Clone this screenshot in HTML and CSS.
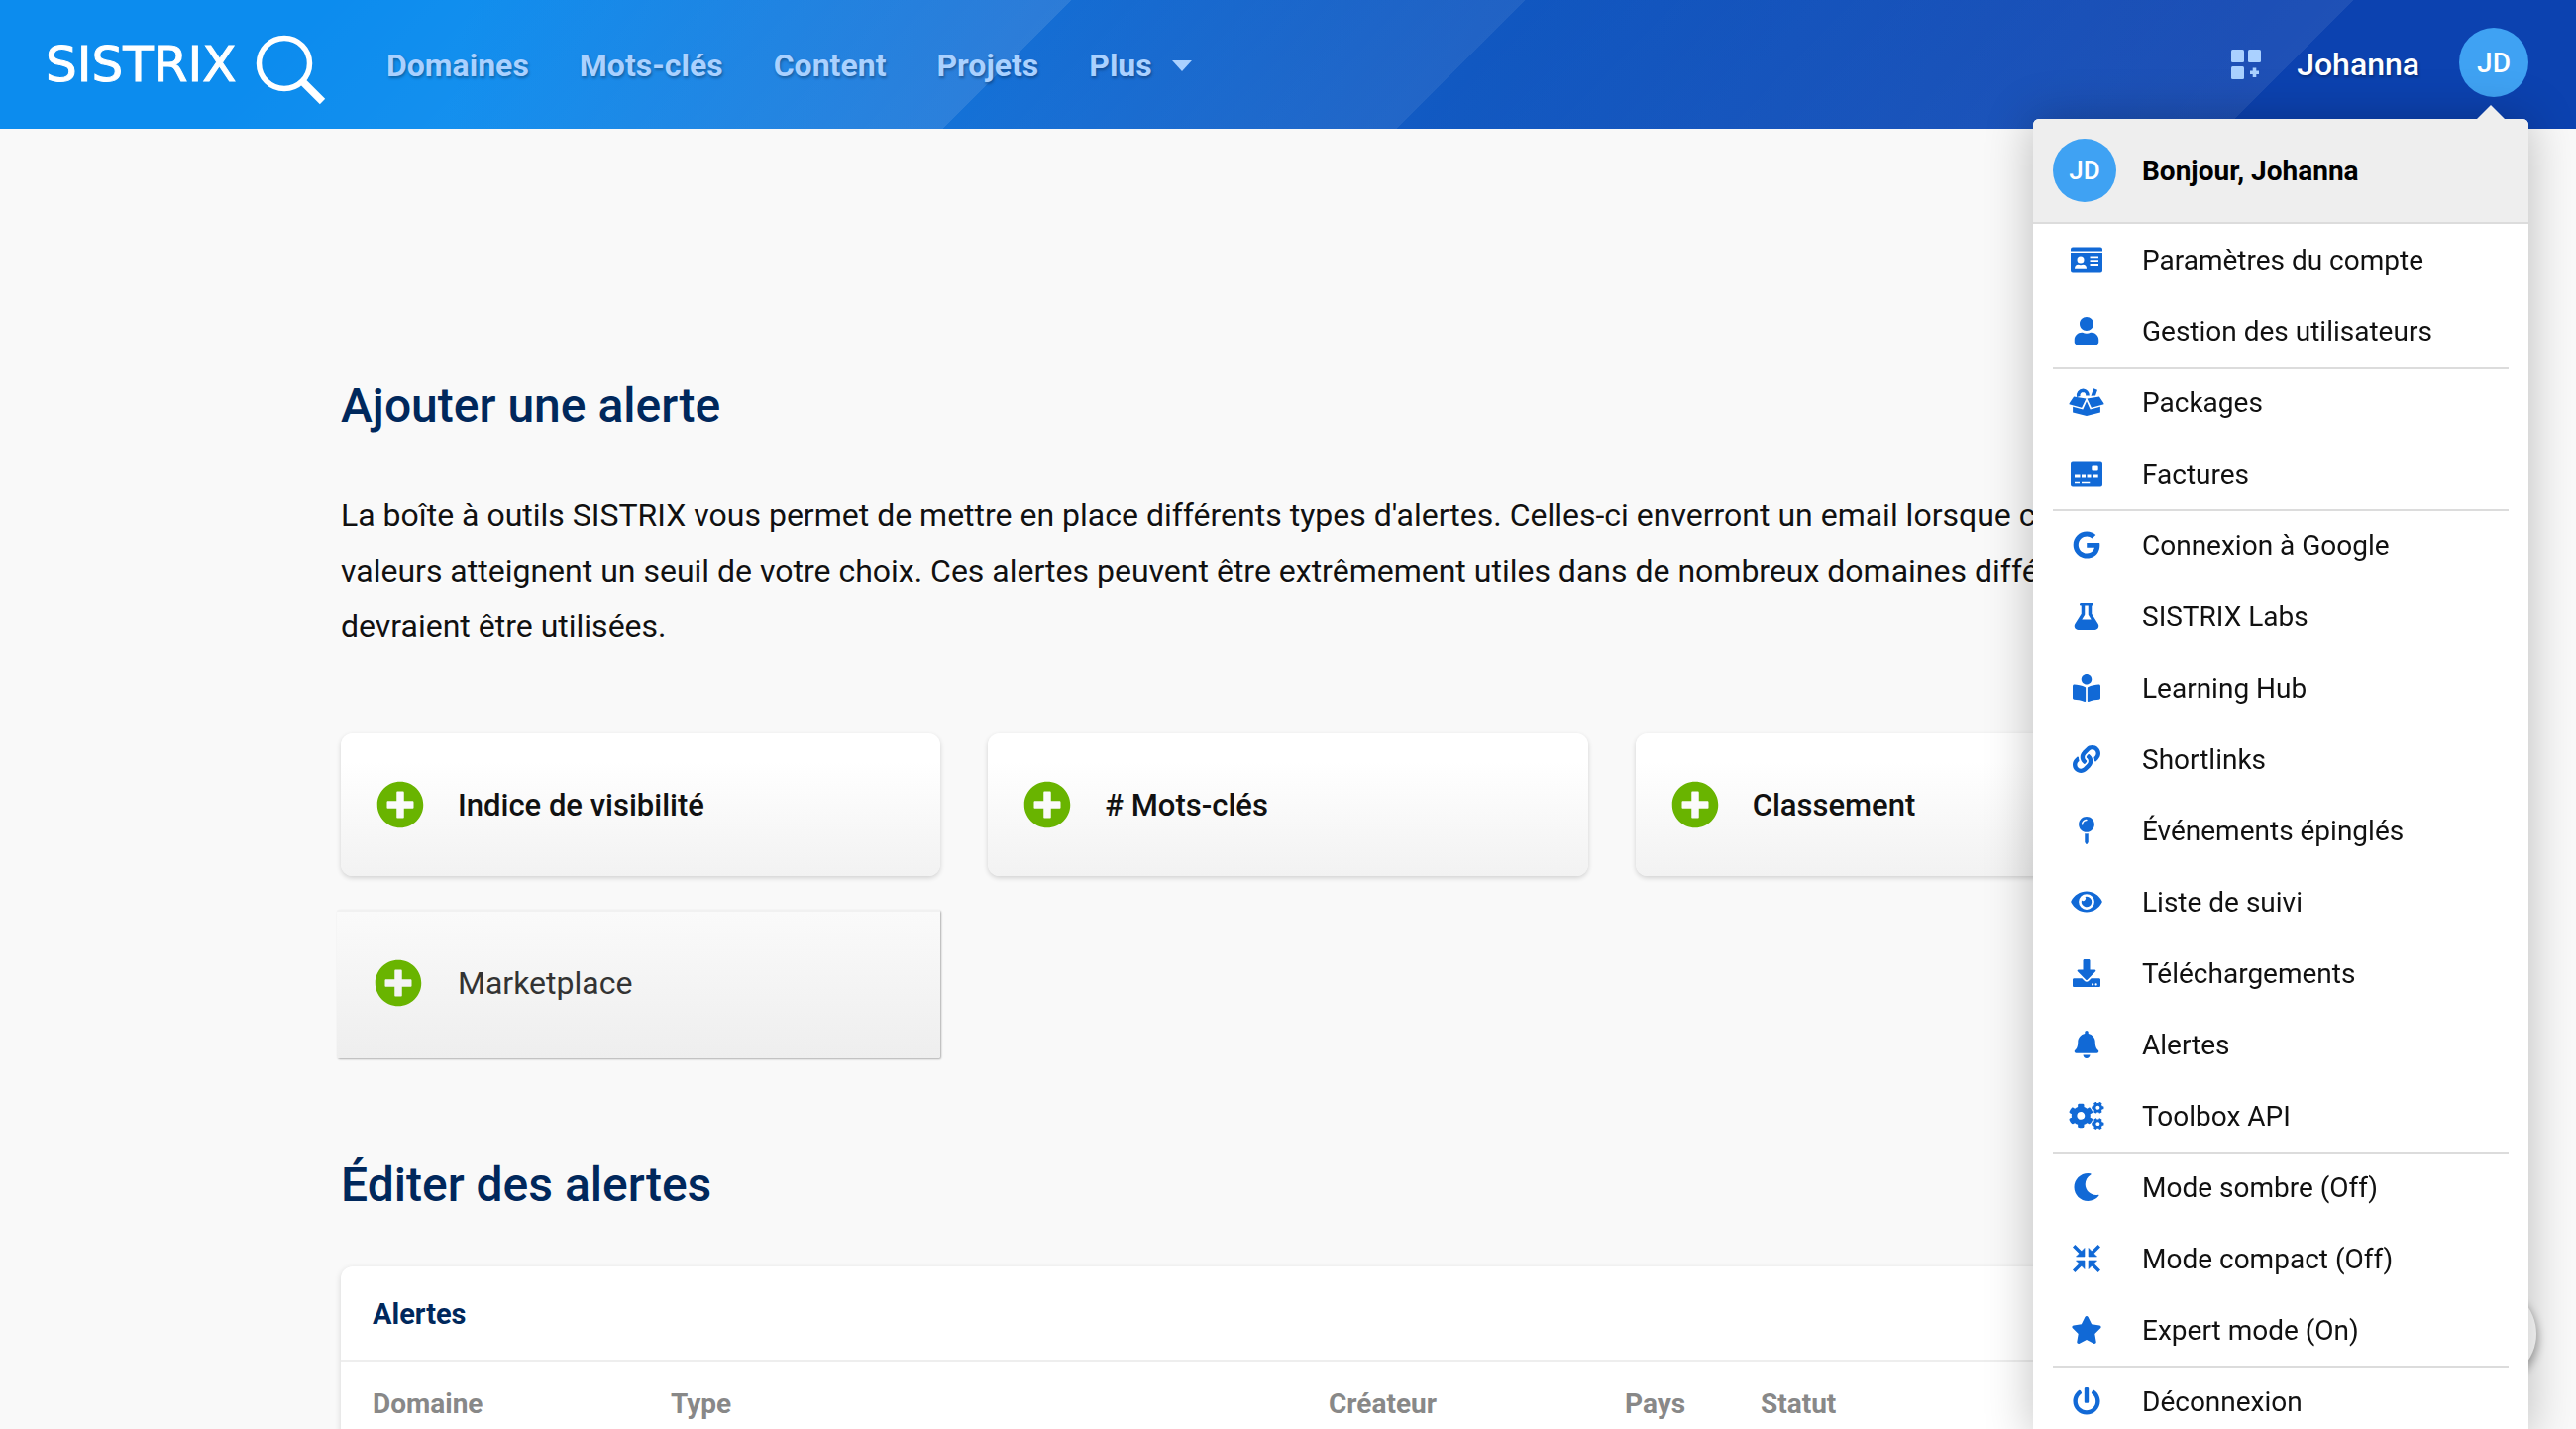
FILE: index.html
```html
<!DOCTYPE html>
<html lang="fr">
<head>
<meta charset="utf-8">
<meta name="viewport" content="width=device-width, initial-scale=1">
<title>Alertes - SISTRIX</title>
<link rel="stylesheet" href="styles.css">
</head>
<body>
<svg class="sprite" aria-hidden="true">
  <symbol id="i-plus" viewBox="0 0 512 512"><path d="M256 8C119 8 8 119 8 256s111 248 248 248 248-111 248-248S393 8 256 8zm144 276c0 6.6-5.4 12-12 12h-92v92c0 6.6-5.4 12-12 12h-56c-6.6 0-12-5.4-12-12v-92h-92c-6.6 0-12-5.4-12-12v-56c0-6.6 5.4-12 12-12h92v-92c0-6.6 5.4-12 12-12h56c6.6 0 12 5.4 12 12v92h92c6.6 0 12 5.4 12 12v56z"/></symbol>
  <symbol id="i-card" viewBox="0 0 32 28"><path fill-rule="evenodd" d="M2 1.500h28a2 2 0 0 1 2 2V5.500H0V3.500a2 2 0 0 1 2-2zM0 7h32v17.500a2 2 0 0 1-2 2H2a2 2 0 0 1-2-2zM10 10.500a3.500 3.500 0 1 0 0 7a3.500 3.500 0 1 0 0-7zM4 22.700h12c0-2.500-1.500-4-3.500-4l-2.500.6-2.500-.6c-2 0-3.500 1.500-3.500 4zM19.500 10.500v1.800h8.500v-1.800zM19.500 14.300v1.800h8.500v-1.800zM19.500 18.100v1.800h8.500v-1.800z"/></symbol>
  <symbol id="i-user" viewBox="0 0 448 512"><path d="M224 256c70.700 0 128-57.300 128-128S294.700 0 224 0 96 57.300 96 128s57.300 128 128 128zm89.600 32h-16.700c-22.200 10.200-46.900 16-72.900 16s-50.600-5.800-72.900-16h-16.700C60.200 288 0 348.200 0 422.400V464c0 26.500 21.500 48 48 48h352c26.500 0 48-21.500 48-48v-41.600c0-74.200-60.200-134.400-134.400-134.400z"/></symbol>
  <symbol id="i-box" viewBox="0 0 35 28"><path d="M9.300 8.500A5 5 0 0 1 14 2.200A5 5 0 0 1 18.500 7.500" fill="none" stroke="currentColor" stroke-width="3.600"/><path d="M24.600.3l3.900 1.500-2 5.700-4.500.3zM4.600 8.500l12.400 2-4.400 9.200L.7 16.600a1 1 0 0 1-.6-1.400zM30.400 8.500l-12.400 2 4.400 9.200 11.900-3.100a1 1 0 0 0 .6-1.400zM3.600 18.800l10.200 2.800 3.700-8.400 3.700 8.400 10.200-2.800v5.600L17.500 28 3.600 24.400z"/></symbol>
  <symbol id="i-bill" viewBox="0 0 32 28"><path fill-rule="evenodd" d="M2 1.500h28a2 2 0 0 1 2 2v21a2 2 0 0 1-2 2H2a2 2 0 0 1-2-2v-21a2 2 0 0 1 2-2zM22.500 5.500h4a1.200 1.200 0 0 1 1.200 1.200v2.600a1.200 1.200 0 0 1-1.200 1.200h-4a1.200 1.200 0 0 1-1.200-1.200V6.700a1.200 1.200 0 0 1 1.200-1.200zM4 14.500v3h5.500v-3zM11 14.500v3h4v-3zM16.500 14.500v3h4v-3zM22 14.500v3h5.700v-3zM4 21.700v1.600h5v-1.600zM11 21.700v1.600h8.300v-1.600z"/></symbol>
  <symbol id="i-google" viewBox="0 0 488 512"><path d="M488 261.800C488 403.300 391.100 504 248 504 110.800 504 0 393.200 0 256S110.800 8 248 8c66.800 0 123 24.500 166.300 64.900l-67.500 64.900C258.500 52.600 94.300 116.600 94.300 256c0 86.500 69.100 156.600 153.700 156.600 98.200 0 135-70.400 140.800-106.900H248v-85.300h236.100c2.300 12.700 3.900 24.900 3.900 41.400z"/></symbol>
  <symbol id="i-flask" viewBox="0 0 448 512"><path d="M437.200 403.500L320 215V64h8c13.300 0 24-10.700 24-24V24c0-13.300-10.700-24-24-24H120c-13.300 0-24 10.700-24 24v16c0 13.300 10.700 24 24 24h8v151L10.800 403.500C-18.500 450.600 15.300 512 70.900 512h306.200c55.700 0 89.400-61.500 60.100-108.500zM137.900 320l48.200-77.600c3.700-5.200 5.800-11.600 5.800-18.400V64h64v160c0 6.900 2.200 13.200 5.800 18.400l48.200 77.600h-172z"/></symbol>
  <symbol id="i-reader" viewBox="0 0 512 512"><path d="M352 96c0-53.020-42.980-96-96-96s-96 42.980-96 96 42.980 96 96 96 96-42.980 96-96zM233.590 241.100c-59.330-36.320-155.430-46.300-203.790-49.050C13.550 191.130 0 203.510 0 219.140v222.800c0 14.330 11.590 26.280 26.490 27.050 43.660 2.290 131.990 10.680 193.040 41.430 9.370 4.720 20.480-1.710 20.480-11.870V252.560c-.01-4.670-2.320-8.950-6.420-11.460zm248.610-49.050c-48.350 2.740-144.460 12.730-203.780 49.050-4.100 2.510-6.410 6.960-6.410 11.630v245.790c0 10.190 11.140 16.630 20.540 11.900 61.040-30.720 149.320-39.110 192.970-41.400 14.900-.78 26.490-12.730 26.490-27.060V219.140c-.01-15.630-13.560-28.010-29.810-27.090z"/></symbol>
  <symbol id="i-link" viewBox="0 0 512 512"><path d="M326.612 185.391c59.747 59.809 58.927 155.698.36 214.590-.11.120-.24.250-.36.370l-67.200 67.200c-59.270 59.270-155.699 59.262-214.960 0-59.270-59.260-59.270-155.700 0-214.960l37.106-37.106c9.840-9.840 26.786-3.300 27.294 10.606.648 17.722 3.826 35.527 9.690 52.721 1.986 5.822.567 12.262-3.783 16.612l-13.087 13.087c-28.026 28.026-28.905 73.660-1.155 101.960 28.024 28.579 74.086 28.749 102.325.510l67.200-67.190c28.191-28.191 28.073-73.757 0-101.830-3.701-3.694-7.429-6.564-10.341-8.569a16.037 16.037 0 0 1-6.947-12.606c-.396-10.567 3.348-21.456 11.698-29.806l21.054-21.055c5.521-5.521 14.182-6.199 20.584-1.731a152.482 152.482 0 0 1 20.522 17.197zM467.547 44.449c-59.261-59.262-155.690-59.270-214.960 0l-67.200 67.200c-.12.120-.25.250-.36.370-58.566 58.892-59.387 154.781.360 214.590a152.454 152.454 0 0 0 20.521 17.196c6.402 4.468 15.064 3.789 20.584-1.731l21.054-21.055c8.350-8.350 12.094-19.239 11.698-29.806a16.037 16.037 0 0 0-6.947-12.606c-2.912-2.005-6.640-4.875-10.341-8.569-28.073-28.073-28.191-73.639 0-101.830l67.200-67.190c28.239-28.239 74.300-28.069 102.325.510 27.750 28.300 26.872 73.934-1.155 101.960l-13.087 13.087c-4.350 4.350-5.769 10.790-3.783 16.612 5.864 17.194 9.042 34.999 9.690 52.721.509 13.906 17.454 20.446 27.294 10.606l37.106-37.106c59.271-59.259 59.271-155.699.001-214.959z"/></symbol>
  <symbol id="i-pin" viewBox="0 0 288 512"><path d="M112 316.940v156.690l22.020 33.020c4.750 7.120 15.220 7.120 19.970 0L176 473.630V316.940c-10.390 1.920-21.060 3.060-32 3.060s-21.610-1.140-32-3.060zM144 0C64.470 0 0 64.470 0 144s64.470 144 144 144 144-64.470 144-144S223.530 0 144 0zm0 76c-37.500 0-68 30.500-68 68 0 6.620-5.380 12-12 12s-12-5.380-12-12c0-50.730 41.280-92 92-92 6.620 0 12 5.380 12 12s-5.380 12-12 12z"/></symbol>
  <symbol id="i-eye" viewBox="0 0 576 512"><path d="M572.520 241.400C518.290 135.590 410.930 64 288 64S57.680 135.640 3.480 241.410a32.350 32.350 0 0 0 0 29.190C57.710 376.410 165.070 448 288 448s230.320-71.640 284.520-177.410a32.350 32.350 0 0 0 0-29.190zM288 400a144 144 0 1 1 144-144 143.930 143.930 0 0 1-144 144zm0-240a95.310 95.310 0 0 0-25.310 3.790 47.850 47.850 0 0 1-66.900 66.900A95.780 95.780 0 1 0 288 160z"/></symbol>
  <symbol id="i-download" viewBox="0 0 512 512"><path d="M216 0h80c13.300 0 24 10.700 24 24v168h87.700c17.800 0 26.700 21.500 14.100 34.100L269.700 378.300c-7.500 7.500-19.800 7.500-27.300 0L90.100 226.100c-12.600-12.600-3.700-34.100 14.100-34.100H192V24c0-13.300 10.700-24 24-24zm296 376v112c0 13.300-10.700 24-24 24H24c-13.300 0-24-10.700-24-24V376c0-13.300 10.700-24 24-24h146.700l49 49c20.100 20.100 52.500 20.100 72.600 0l49-49H488c13.300 0 24 10.700 24 24zm-124 88c0-11-9-20-20-20s-20 9-20 20 9 20 20 20 20-9 20-20zm64 0c0-11-9-20-20-20s-20 9-20 20 9 20 20 20 20-9 20-20z"/></symbol>
  <symbol id="i-bell" viewBox="0 0 448 512"><path d="M224 512c35.320 0 63.970-28.650 63.970-64H160.030c0 35.350 28.650 64 63.970 64zm215.390-149.710c-19.320-20.760-55.470-51.990-55.470-154.290 0-77.700-54.480-139.900-127.940-155.160V32c0-17.670-14.320-32-31.980-32s-31.980 14.330-31.980 32v20.840C118.560 68.100 64.080 130.300 64.080 208c0 102.300-36.150 133.530-55.470 154.290-6 6.450-8.660 14.160-8.610 21.710.11 16.400 12.980 32 32.100 32h383.800c19.120 0 32-15.600 32.100-32 .05-7.550-2.610-15.270-8.610-21.710z"/></symbol>
  <symbol id="i-cogs" viewBox="0 0 640 512"><path d="M512.100 191l-8.200 14.300c-3 5.300-9.400 7.500-15.100 5.400-11.800-4.400-22.600-10.700-32.100-18.600-4.600-3.800-5.800-10.500-2.800-15.700l8.200-14.300c-6.900-8-12.300-17.300-15.900-27.400h-16.500c-6 0-11.200-4.300-12.200-10.300-2-12-2.100-24.600 0-37.100 1-6 6.200-10.400 12.200-10.400h16.500c3.600-10.100 9-19.400 15.900-27.400l-8.200-14.300c-3-5.200-1.900-11.900 2.800-15.700 9.500-7.900 20.400-14.200 32.100-18.600 5.700-2.100 12.100.1 15.100 5.400l8.200 14.300c10.500-1.900 21.200-1.900 31.700 0L552 6.300c3-5.300 9.400-7.500 15.100-5.400 11.800 4.400 22.600 10.700 32.100 18.600 4.600 3.800 5.800 10.500 2.800 15.700l-8.200 14.300c6.900 8 12.300 17.300 15.900 27.400h16.500c6 0 11.200 4.300 12.200 10.300 2 12 2.100 24.600 0 37.100-1 6-6.200 10.400-12.200 10.400h-16.500c-3.600 10.100-9 19.400-15.900 27.400l8.200 14.300c3 5.200 1.900 11.900-2.800 15.700-9.500 7.900-20.400 14.200-32.100 18.600-5.700 2.100-12.100-.1-15.100-5.400l-8.200-14.300c-10.400 1.900-21.200 1.900-31.700 0zm-10.500-58.800c38.500 29.600 82.400-14.300 52.800-52.800-38.500-29.700-82.400 14.300-52.800 52.800zM386.300 286.100l33.700 16.800c10.100 5.800 14.500 18.100 10.500 29.100-8.900 24.200-26.400 46.400-42.600 65.800-7.400 8.900-20.200 11.100-30.300 5.300l-29.100-16.800c-16 13.700-34.600 24.600-54.900 31.700v33.600c0 11.600-8.300 21.600-19.700 23.600-24.600 4.200-50.400 4.400-75.900 0-11.500-2-20-11.900-20-23.600V418c-20.300-7.200-38.900-18-54.900-31.700L74 403c-10 5.800-22.900 3.600-30.300-5.300-16.200-19.400-33.300-41.600-42.200-65.700-4-10.900.4-23.200 10.500-29.100l33.300-16.800c-3.900-20.900-3.900-42.400 0-63.400L12 205.800c-10.100-5.800-14.600-18.100-10.500-29 8.900-24.200 26-46.400 42.200-65.800 7.400-8.900 20.200-11.100 30.300-5.300l29.100 16.800c16-13.700 34.600-24.600 54.900-31.700V57.100c0-11.500 8.200-21.500 19.600-23.500 24.600-4.200 50.500-4.400 76-.1 11.500 2 20 11.900 20 23.600v33.600c20.300 7.200 38.900 18 54.900 31.700l29.100-16.800c10-5.800 22.900-3.600 30.300 5.300 16.200 19.400 33.200 41.600 42.100 65.800 4 10.900.1 23.200-10 29.100l-33.700 16.800c3.900 21 3.900 42.500 0 63.500zm-117.600 21.100c59.200-77-28.700-164.900-105.700-105.700-59.200 77 28.700 164.900 105.700 105.700zm243.400 182.700l-8.200 14.300c-3 5.300-9.400 7.500-15.100 5.400-11.800-4.400-22.600-10.700-32.100-18.600-4.600-3.800-5.800-10.500-2.800-15.700l8.200-14.300c-6.900-8-12.300-17.300-15.900-27.400h-16.500c-6 0-11.200-4.300-12.200-10.300-2-12-2.100-24.600 0-37.100 1-6 6.200-10.400 12.200-10.400h16.500c3.600-10.100 9-19.400 15.900-27.400l-8.200-14.300c-3-5.200-1.900-11.900 2.800-15.700 9.500-7.900 20.400-14.200 32.100-18.600 5.700-2.100 12.100.1 15.100 5.400l8.200 14.300c10.500-1.900 21.200-1.900 31.700 0l8.200-14.300c3-5.300 9.400-7.500 15.100-5.400 11.800 4.400 22.600 10.700 32.100 18.600 4.600 3.800 5.800 10.500 2.800 15.700l-8.200 14.300c6.900 8 12.300 17.300 15.900 27.400h16.500c6 0 11.200 4.300 12.200 10.300 2 12 2.100 24.600 0 37.100-1 6-6.200 10.400-12.200 10.400h-16.500c-3.600 10.100-9 19.400-15.900 27.400l8.200 14.300c3 5.200 1.900 11.900-2.800 15.700-9.500 7.900-20.400 14.200-32.100 18.600-5.700 2.100-12.100-.1-15.100-5.400l-8.200-14.300c-10.400 1.900-21.200 1.900-31.700 0zM501.600 431c38.500 29.600 82.400-14.300 52.800-52.800-38.500-29.600-82.400 14.300-52.800 52.800z"/></symbol>
  <symbol id="i-moon" viewBox="0 0 512 512"><path d="M283.211 512c78.962 0 151.079-35.925 198.857-94.792 7.068-8.708-.639-21.430-11.562-19.350-124.203 23.654-238.262-71.576-238.262-196.954 0-72.222 38.662-138.635 101.498-174.394 9.686-5.512 7.250-20.197-3.756-22.230A258.156 258.156 0 0 0 283.211 0c-141.309 0-256 114.511-256 256 0 141.309 114.511 256 256 256z"/></symbol>
  <symbol id="i-compress" viewBox="0 0 28 28"><path d="M12 3.500V12H3.500zM16 3.500V12h8.500zM12 24.500V16H3.500zM16 24.500V16h8.500z" stroke="currentColor" stroke-width=".6" stroke-linejoin="round"/><path d="M1.200 1.200L9 9M26.800 1.200L19 9M1.200 26.800L9 19M26.800 26.800L19 19" fill="none" stroke="currentColor" stroke-width="3.400"/></symbol>
  <symbol id="i-star" viewBox="0 0 576 512"><path d="M259.300 17.800L194 150.200 47.900 171.500c-26.200 3.800-36.700 36.100-17.700 54.600l105.700 103-25 145.500c-4.500 26.300 23.200 46 46.400 33.700L288 439.600l130.700 68.700c23.200 12.200 50.900-7.400 46.400-33.700l-25-145.500 105.700-103c19-18.500 8.500-50.800-17.700-54.600L382 150.200 316.700 17.800c-11.700-23.600-45.600-23.900-57.400 0z"/></symbol>
  <symbol id="i-power" viewBox="0 0 512 512"><path d="M400 54.100c63 45 104 118.600 104 201.900 0 136.800-110.800 247.700-247.500 248C120 504.300 8.200 393 8 256.400 7.900 173.100 48.900 99.300 111.800 54.200c11.700-8.300 28-4.800 35 7.700L162.600 90c5.900 10.500 3.100 23.800-6.600 31-41.500 30.800-68 79.600-68 134.900-.1 92.300 74.500 168.100 168 168.100 91.600 0 168.600-74.200 168-169.100-.3-51.800-24.700-101.800-68.100-134-9.700-7.200-12.400-20.500-6.500-30.900l15.800-28.100c7-12.400 23.200-16.100 34.800-7.800zM296 264V24c0-13.300-10.700-24-24-24h-32c-13.300 0-24 10.700-24 24v240c0 13.300 10.700 24 24 24h32c13.300 0 24-10.700 24-24z"/></symbol>
</svg>

<div class="app">
  <header class="topbar">
    <a class="logo" href="#" aria-label="SISTRIX">
      <span class="logo-word">SISTRIX</span>
      <svg class="logo-glass" viewBox="0 0 72 72" aria-hidden="true"><circle cx="29" cy="29" r="25.500" fill="none" stroke="#fff" stroke-width="5.500"/><path d="M47 47L67.500 67.500" stroke="#fff" stroke-width="7.500"/></svg>
    </a>
    <nav class="main-nav" aria-label="Navigation principale">
      <a href="#">Domaines</a>
      <a href="#">Mots-clés</a>
      <a href="#">Content</a>
      <a href="#">Projets</a>
      <button type="button" class="more">Plus <span class="caret"></span></button>
    </nav>
    <div class="account">
      <button type="button" class="grid-button" aria-label="Applications">
        <svg viewBox="0 0 30 30" aria-hidden="true"><rect width="13" height="13" rx="1.500"/><rect x="17" width="13" height="13" rx="1.500"/><rect y="17" width="13" height="13" rx="1.500"/><path d="M21.700 18.500h3.600v3h2.700v3.400h-2.700v3h-3.600v-3H19v-3.400h2.700z"/></svg>
      </button>
      <span class="account-name">Johanna</span>
      <button type="button" class="avatar" aria-expanded="true">JD</button>
    </div>

    <div class="menu">
      <div class="menu-head">
        <span class="avatar avatar-small">JD</span>
        <strong>Bonjour, Johanna</strong>
      </div>
      <ul class="menu-list">
        <li><a href="#"><svg><use href="#i-card"/></svg>Paramètres du compte</a></li>
        <li><a href="#"><svg><use href="#i-user"/></svg>Gestion des utilisateurs</a></li>
        <li class="divided"><a href="#"><svg><use href="#i-box"/></svg>Packages</a></li>
        <li><a href="#"><svg><use href="#i-bill"/></svg>Factures</a></li>
        <li class="divided"><a href="#"><svg><use href="#i-google"/></svg>Connexion à Google</a></li>
        <li><a href="#"><svg><use href="#i-flask"/></svg>SISTRIX Labs</a></li>
        <li><a href="#"><svg><use href="#i-reader"/></svg>Learning Hub</a></li>
        <li><a href="#"><svg><use href="#i-link"/></svg>Shortlinks</a></li>
        <li><a href="#"><svg><use href="#i-pin"/></svg>Événements épinglés</a></li>
        <li><a href="#"><svg><use href="#i-eye"/></svg>Liste de suivi</a></li>
        <li><a href="#"><svg><use href="#i-download"/></svg>Téléchargements</a></li>
        <li><a href="#"><svg><use href="#i-bell"/></svg>Alertes</a></li>
        <li><a href="#"><svg><use href="#i-cogs"/></svg>Toolbox API</a></li>
        <li class="divided"><button type="button"><svg><use href="#i-moon"/></svg>Mode sombre (Off)</button></li>
        <li><button type="button"><svg><use href="#i-compress"/></svg>Mode compact (Off)</button></li>
        <li><button type="button"><svg><use href="#i-star"/></svg>Expert mode (On)</button></li>
        <li class="divided"><a href="#"><svg><use href="#i-power"/></svg>Déconnexion</a></li>
      </ul>
    </div>
  </header>

  <main class="content">
    <h1>Ajouter une alerte</h1>
    <p class="intro">La boîte à outils SISTRIX vous permet de mettre en place différents types d'alertes. Celles-ci enverront un email lorsque certaines valeurs atteignent un seuil de votre choix. Ces alertes peuvent être extrêmement utiles dans de nombreux domaines différents et elles devraient être utilisées.</p>
    <div class="cards">
      <button type="button" class="card"><svg><use href="#i-plus"/></svg>Indice de visibilité</button>
      <button type="button" class="card"><svg><use href="#i-plus"/></svg># Mots-clés</button>
      <button type="button" class="card"><svg><use href="#i-plus"/></svg>Classement</button>
      <button type="button" class="card card-flat"><svg><use href="#i-plus"/></svg>Marketplace</button>
    </div>
    <h2>Éditer des alertes</h2>
    <section class="panel">
      <h3>Alertes</h3>
      <table>
        <colgroup><col class="c-domain"><col class="c-type"><col class="c-author"><col class="c-country"><col></colgroup>
        <thead><tr><th scope="col">Domaine</th><th scope="col">Type</th><th scope="col">Créateur</th><th scope="col">Pays</th><th scope="col">Statut</th></tr></thead>
      </table>
    </section>
  </main>
  <button type="button" class="help" aria-label="Aide"></button>
</div>
</body>
</html>
```
FILE: styles.css
```css
* { box-sizing: border-box; }

body {
  margin: 0;
  background: #f9f9f9;
  color: #111;
  font-family: Roboto, "Liberation Sans", sans-serif;
  font-size: 32px;
}

button {
  border: 0;
  padding: 0;
  background: none;
  color: inherit;
  font: inherit;
  text-align: left;
  cursor: pointer;
}

a { color: inherit; text-decoration: none; }

.sprite { position: absolute; width: 0; height: 0; }

.app {
  height: 100vh;
  overflow: hidden auto;
  scrollbar-width: none;
}

/* Top bar */
.topbar {
  position: relative;
  z-index: 2;
  display: flex;
  align-items: center;
  height: 130px;
  padding: 0 48px 0 46px;
  background:
    linear-gradient(135deg,
      rgba(255, 255, 255, 0) 12%, rgba(255, 255, 255, .1) 39.6%,
      rgba(255, 255, 255, 0) 39.6%, rgba(255, 255, 255, .07) 56.4%,
      rgba(255, 255, 255, 0) 56.4%, rgba(255, 255, 255, .08) 87%,
      rgba(255, 255, 255, 0) 87%),
    linear-gradient(100deg, #0c8cee 0%, #0c8cee 18%, #156ed4 40%, #1158c1 57%, #0c42b0 87%, #0c42b0 100%);
}

.logo {
  display: flex;
  align-items: center;
  width: 344px;
  color: #fff;
}

.logo-word {
  min-width: 212px;
  font: 400 50px/64px "DejaVu Sans", sans-serif;
  -webkit-text-stroke: 1px #fff;
}

.logo-glass { width: 72px; height: 72px; margin-top: 12px; }

.main-nav {
  display: flex;
  align-items: center;
  gap: 51px;
  padding-top: 2px;
  color: #aad1ff;
  font-weight: 700;
  text-shadow: 1px 2px 3px rgba(0, 0, 0, .3);
}

.more { display: flex; align-items: center; gap: 20px; text-shadow: inherit; }

.caret {
  border: 10px solid transparent;
  border-top: 11px solid #aad1ff;
  border-bottom: 0;
}

.account {
  display: flex;
  align-items: center;
  margin-left: auto;
  color: #fff;
}

.grid-button svg {
  display: block;
  width: 30px;
  height: 30px;
  fill: #aad1ff;
}

.account-name {
  margin: 0 40px 0 36px;
  font-weight: 500;
  text-shadow: 1px 2px 3px rgba(0, 0, 0, .3);
}

.avatar {
  display: flex;
  align-items: center;
  justify-content: center;
  width: 70px;
  height: 70px;
  margin-bottom: 4px;
  border-radius: 50%;
  background: #3fa2f3;
  color: #fff;
  font-size: 28px;
  font-weight: 500;
}

/* Account menu */
.menu {
  position: absolute;
  top: 120px;
  right: 48px;
  width: 500px;
  border-radius: 6px;
  background: #fff;
  box-shadow: 0 0 48px rgba(0, 0, 0, .25);
  font-size: 28px;
}

.menu::before {
  content: "";
  position: absolute;
  top: -14px;
  right: 24px;
  border: 14px solid transparent;
  border-top: 0;
  border-bottom-color: #eee;
}

.menu-head {
  display: flex;
  align-items: center;
  gap: 26px;
  padding: 20px;
  border-bottom: 2px solid #dcdcdc;
  border-radius: 6px 6px 0 0;
  background: #eee;
  color: #000;
}

.avatar-small {
  width: 64px;
  height: 64px;
  margin: 0;
  font-size: 26px;
}

.menu-list { margin: 0; padding: 0 20px; list-style: none; }

.menu-list li { height: 72px; }

.menu-list .divided { border-top: 2px solid #dcdcdc; }

.menu-list a,
.menu-list button {
  display: flex;
  align-items: center;
  gap: 22px;
  width: 100%;
  height: 72px;
}

.menu-list .divided a,
.menu-list .divided button { height: 68px; }

.menu-list svg {
  width: 68px;
  height: 28px;
  color: #1169d6;
  fill: currentColor;
}

/* Page content */
.content {
  max-width: 2008px;
  margin: 0 auto;
  padding: 248px 48px 0;
}

h1, h2 {
  margin: 0;
  color: #00285c;
  font: 500 48px/64px Roboto, sans-serif;
}

.intro {
  margin: 50px 0 80px;
  line-height: 56px;
  text-shadow: 1px 2px 1px #fff;
}

.cards {
  display: grid;
  grid-template-columns: repeat(3, 1fr);
  gap: 36px 48px;
}

.card {
  display: flex;
  align-items: center;
  gap: 34px;
  height: 144px;
  padding-left: 36px;
  border-radius: 12px;
  background: linear-gradient(#fff 20%, #f2f2f2);
  box-shadow: 0 2px 5px rgba(0, 0, 0, .16);
  font-size: 31px;
  font-weight: 500;
}

.card svg { width: 48px; height: 48px; fill: #69b400; }

.card-flat {
  gap: 36px;
  height: 150px;
  margin: -2px 0 0 -4px;
  padding: 0 0 4px 38px;
  border-top: 2px solid #f1f1f1;
  border-radius: 2px;
  background: linear-gradient(#fafafa, #eee);
  box-shadow: 1px 1px 2px rgba(0, 0, 0, .3);
  color: #333;
  font-size: 32px;
  font-weight: 400;
}

h2 { margin: 96px 0 50px; }

.panel {
  border-radius: 12px;
  background: #fff;
  box-shadow: 0 2px 6px rgba(0, 0, 0, .15);
}

h3 {
  margin: 0;
  padding: 2px 32px 0;
  border-bottom: 2px solid #eee;
  color: #00285c;
  font-size: 29px;
  line-height: 92px;
}

table {
  width: 100%;
  border-collapse: collapse;
  table-layout: fixed;
}

th {
  height: 84px;
  padding: 0 0 0 32px;
  color: #888;
  font-size: 28px;
  text-align: left;
}

.c-domain { width: 301px; }
.c-type { width: 664px; }
.c-author { width: 299px; }
.c-country { width: 137px; }

.help {
  position: fixed;
  right: 40px;
  bottom: 48px;
  z-index: 1;
  width: 96px;
  height: 96px;
  border-radius: 50%;
  background: #fff;
  box-shadow: 2px 4px 8px rgba(0, 0, 0, .3);
}
```
